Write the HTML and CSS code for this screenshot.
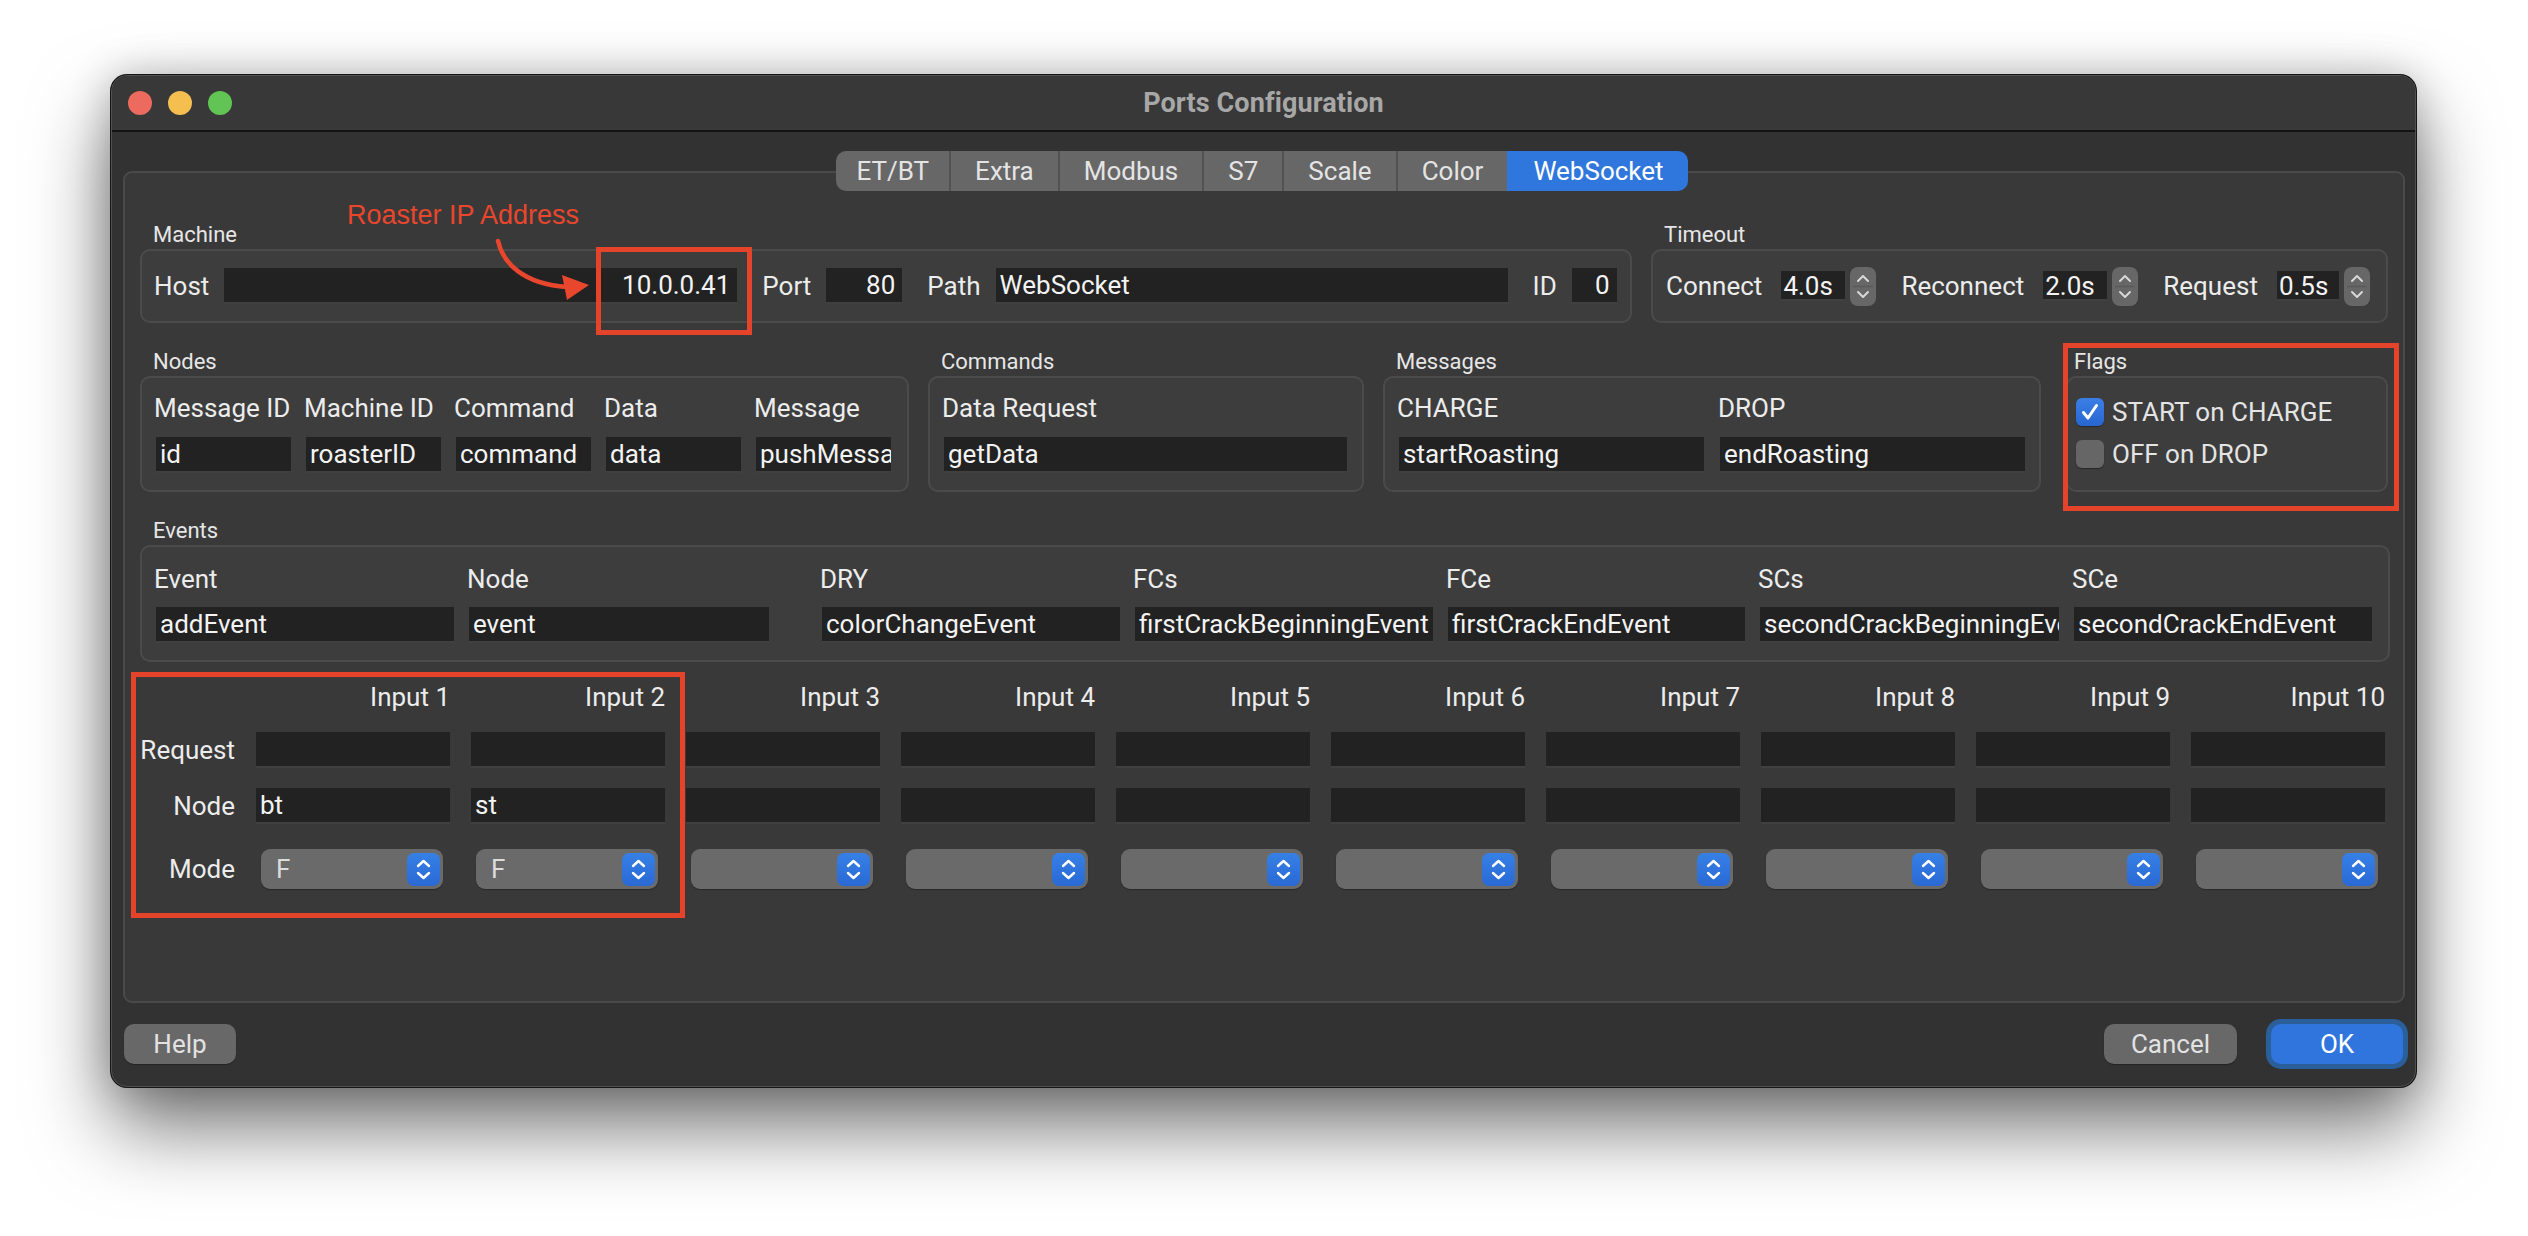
FILE: index.html
```html
<!DOCTYPE html>
<html lang="en">
<head>
<meta charset="utf-8">
<title>Ports Configuration</title>
<link rel="stylesheet" href="styles.css">
</head>
<body>
<div class="window">
  <div class="titlebar">
    <div class="lights">
      <span class="light red"></span>
      <span class="light yellow"></span>
      <span class="light green"></span>
    </div>
    <div class="title">Ports Configuration</div>
    <div></div>
  </div>

  <div class="content">
    <div class="tabs">
      <div class="tab">ET/BT</div>
      <div class="tab">Extra</div>
      <div class="tab">Modbus</div>
      <div class="tab">S7</div>
      <div class="tab">Scale</div>
      <div class="tab">Color</div>
      <div class="tab active">WebSocket</div>
    </div>

    <div class="pane">
      <div class="row row1">
        <div class="section sec-machine">
          <div class="sec-title">Machine</div>
          <div class="group hgroup">
            <span class="lbl">Host</span>
            <span class="field right w-host">10.0.0.41</span>
            <span class="lbl">Port</span>
            <span class="field right w-port">80</span>
            <span class="lbl">Path</span>
            <span class="field w-path">WebSocket</span>
            <span class="lbl">ID</span>
            <span class="field right w-id">0</span>
          </div>
        </div>
        <div class="section sec-timeout">
          <div class="sec-title">Timeout</div>
          <div class="group hgroup tgroup">
            <span class="lbl">Connect</span>
            <span class="field small w-time">4.0s</span>
            <span class="spin"><svg width="26" height="39" viewBox="0 0 26 39"><path d="M8 14 L13 9 L18 14" /><path d="M8 25 L13 30 L18 25" /><line x1="3" y1="19.5" x2="23" y2="19.5" class="div"/></svg></span>
            <span class="lbl">Reconnect</span>
            <span class="field small w-time">2.0s</span>
            <span class="spin"><svg width="26" height="39" viewBox="0 0 26 39"><path d="M8 14 L13 9 L18 14" /><path d="M8 25 L13 30 L18 25" /><line x1="3" y1="19.5" x2="23" y2="19.5" class="div"/></svg></span>
            <span class="lbl">Request</span>
            <span class="field small w-time2">0.5s</span>
            <span class="spin"><svg width="26" height="39" viewBox="0 0 26 39"><path d="M8 14 L13 9 L18 14" /><path d="M8 25 L13 30 L18 25" /><line x1="3" y1="19.5" x2="23" y2="19.5" class="div"/></svg></span>
          </div>
        </div>
      </div>

      <div class="row row2">
        <div class="section sec-nodes">
          <div class="sec-title">Nodes</div>
          <div class="group vgroup nodes-grid">
            <span class="hdr">Message ID</span>
            <span class="hdr">Machine ID</span>
            <span class="hdr">Command</span>
            <span class="hdr">Data</span>
            <span class="hdr">Message</span>
            <span class="field">id</span>
            <span class="field">roasterID</span>
            <span class="field">command</span>
            <span class="field">data</span>
            <span class="field">pushMessage</span>
          </div>
        </div>
        <div class="section sec-commands">
          <div class="sec-title">Commands</div>
          <div class="group vgroup cmd-grid">
            <span class="hdr">Data Request</span>
            <span class="field">getData</span>
          </div>
        </div>
        <div class="section sec-messages">
          <div class="sec-title">Messages</div>
          <div class="group vgroup msg-grid">
            <span class="hdr">CHARGE</span>
            <span class="hdr">DROP</span>
            <span class="field">startRoasting</span>
            <span class="field">endRoasting</span>
          </div>
        </div>
        <div class="section sec-flags">
          <div class="sec-title">Flags</div>
          <div class="group flags">
            <div class="flag">
              <span class="check on"><svg width="28" height="28" viewBox="0 0 28 28"><path d="M7.5 14.5 L12 20 L20.5 7.5"/></svg></span>
              <span class="lbl">START on CHARGE</span>
            </div>
            <div class="flag">
              <span class="check"></span>
              <span class="lbl">OFF on DROP</span>
            </div>
          </div>
        </div>
      </div>

      <div class="row row3">
        <div class="section sec-events">
          <div class="sec-title">Events</div>
          <div class="group vgroup events-grid">
            <span class="hdr">Event</span>
            <span class="hdr">Node</span>
            <span class="hdr dry">DRY</span>
            <span class="hdr">FCs</span>
            <span class="hdr">FCe</span>
            <span class="hdr">SCs</span>
            <span class="hdr">SCe</span>
            <span class="field">addEvent</span>
            <span class="field">event</span>
            <span class="field dry">colorChangeEvent</span>
            <span class="field">firstCrackBeginningEvent</span>
            <span class="field">firstCrackEndEvent</span>
            <span class="field">secondCrackBeginningEvent</span>
            <span class="field">secondCrackEndEvent</span>
          </div>
        </div>
      </div>

      <div class="inputs">
        <span></span>
        <span class="ihdr">Input 1</span>
        <span class="ihdr">Input 2</span>
        <span class="ihdr">Input 3</span>
        <span class="ihdr">Input 4</span>
        <span class="ihdr">Input 5</span>
        <span class="ihdr">Input 6</span>
        <span class="ihdr">Input 7</span>
        <span class="ihdr">Input 8</span>
        <span class="ihdr">Input 9</span>
        <span class="ihdr">Input 10</span>

        <span class="rlbl">Request</span>
        <span class="field"></span><span class="field"></span><span class="field"></span><span class="field"></span><span class="field"></span>
        <span class="field"></span><span class="field"></span><span class="field"></span><span class="field"></span><span class="field"></span>

        <span class="rlbl">Node</span>
        <span class="field">bt</span><span class="field">st</span><span class="field"></span><span class="field"></span><span class="field"></span>
        <span class="field"></span><span class="field"></span><span class="field"></span><span class="field"></span><span class="field"></span>

        <span class="rlbl moderow">Mode</span>
        <span class="combo"><span class="cval">F</span><span class="cbtn"><svg width="33" height="33" viewBox="0 0 33 33"><path d="M11 13 L16.5 8 L22 13"/><path d="M11 20 L16.5 25 L22 20"/></svg></span></span>
        <span class="combo"><span class="cval">F</span><span class="cbtn"><svg width="33" height="33" viewBox="0 0 33 33"><path d="M11 13 L16.5 8 L22 13"/><path d="M11 20 L16.5 25 L22 20"/></svg></span></span>
        <span class="combo"><span class="cval"></span><span class="cbtn"><svg width="33" height="33" viewBox="0 0 33 33"><path d="M11 13 L16.5 8 L22 13"/><path d="M11 20 L16.5 25 L22 20"/></svg></span></span>
        <span class="combo"><span class="cval"></span><span class="cbtn"><svg width="33" height="33" viewBox="0 0 33 33"><path d="M11 13 L16.5 8 L22 13"/><path d="M11 20 L16.5 25 L22 20"/></svg></span></span>
        <span class="combo"><span class="cval"></span><span class="cbtn"><svg width="33" height="33" viewBox="0 0 33 33"><path d="M11 13 L16.5 8 L22 13"/><path d="M11 20 L16.5 25 L22 20"/></svg></span></span>
        <span class="combo"><span class="cval"></span><span class="cbtn"><svg width="33" height="33" viewBox="0 0 33 33"><path d="M11 13 L16.5 8 L22 13"/><path d="M11 20 L16.5 25 L22 20"/></svg></span></span>
        <span class="combo"><span class="cval"></span><span class="cbtn"><svg width="33" height="33" viewBox="0 0 33 33"><path d="M11 13 L16.5 8 L22 13"/><path d="M11 20 L16.5 25 L22 20"/></svg></span></span>
        <span class="combo"><span class="cval"></span><span class="cbtn"><svg width="33" height="33" viewBox="0 0 33 33"><path d="M11 13 L16.5 8 L22 13"/><path d="M11 20 L16.5 25 L22 20"/></svg></span></span>
        <span class="combo"><span class="cval"></span><span class="cbtn"><svg width="33" height="33" viewBox="0 0 33 33"><path d="M11 13 L16.5 8 L22 13"/><path d="M11 20 L16.5 25 L22 20"/></svg></span></span>
        <span class="combo"><span class="cval"></span><span class="cbtn"><svg width="33" height="33" viewBox="0 0 33 33"><path d="M11 13 L16.5 8 L22 13"/><path d="M11 20 L16.5 25 L22 20"/></svg></span></span>
      </div>
    </div>

    <div class="buttons">
      <span class="btn help">Help</span>
      <span class="spacer"></span>
      <span class="btn cancel">Cancel</span>
      <span class="btn ok">OK</span>
    </div>
  </div>

  <div class="note-text">Roaster IP Address</div>
  <svg class="note-arrow" width="120" height="75" viewBox="0 0 120 75">
    <path class="stroke" d="M17 10 C22 32 42 53 86 56"/>
    <polygon points="81,44 108,54 86,69"/>
  </svg>
  <div class="note-box box-ip"></div>
  <div class="note-box box-flags"></div>
  <div class="note-box box-inputs"></div>
</div>
</body>
</html>
```

FILE: styles.css
```css
* { box-sizing: border-box; }

html { background: #ffffff; }

body {
  margin: 0;
  min-height: 1236px;
  background: #ffffff;
  padding: 75px 0 0 111px;
  font-family: Roboto, "Liberation Sans", Arial, sans-serif;
  font-size: 26px;
  color: #e9e9e9;
}

.window {
  position: relative;
  width: 2305px;
  height: 1012px;
  background: #323232;
  border: 1px solid #505050;
  border-radius: 16px;
  overflow: hidden;
  box-shadow:
    0 0 0 1px #161616,
    0 40px 80px rgba(0, 0, 0, 0.55),
    0 0 40px rgba(0, 0, 0, 0.22);
}

/* Title bar */
.titlebar {
  height: 56px;
  background: #383838;
  border-bottom: 2px solid #131313;
  display: grid;
  grid-template-columns: 1fr auto 1fr;
  align-items: center;
}
.lights {
  display: flex;
  gap: 16px;
  padding-left: 16px;
}
.light {
  width: 24px;
  height: 24px;
  border-radius: 50%;
  display: block;
}
.light.red { background: #ec6a5e; }
.light.yellow { background: #f4bf4f; }
.light.green { background: #61c454; }
.title {
  font-weight: bold;
  font-size: 27px;
  color: #a7a7a7;
  letter-spacing: 0.1px;
}

/* Content */
.content {
  padding: 19px 10px 0 11px;
}

.tabs {
  position: relative;
  z-index: 1;
  display: flex;
  justify-content: center;
  height: 40px;
  margin-bottom: -20px;
  padding-right: 4px;
}
.tab {
  background: #676767;
  color: #e4e4e4;
  height: 40px;
  line-height: 40px;
  padding: 0 24px;
  border-left: 2px solid #525252;
}
.tab:first-child {
  border-left: none;
  border-radius: 10px 0 0 10px;
  padding-left: 20px;
  padding-right: 20px;
}
.tab:last-child {
  border-radius: 0 10px 10px 0;
}
.tab.active {
  background: #2f77dc;
  color: #ffffff;
  border-left-color: #2f77dc;
}

.pane {
  height: 832px;
  background: #393939;
  border: 2px solid #4a4a4a;
  border-radius: 9px;
  padding: 48px 15px 0 15px;
}

.row {
  display: flex;
  gap: 19px;
}
.row2, .row3 { margin-top: 25px; }

.sec-title {
  font-size: 22px;
  line-height: 28px;
  height: 28px;
  padding-left: 13px;
  color: #e6e6e6;
}

.group {
  background: #3d3d3d;
  border: 2px solid #4b4b4b;
  border-radius: 10px;
}

.hgroup {
  height: 74px;
  display: flex;
  align-items: center;
  padding-left: 12px;
}

.sec-machine { width: 1492px; }
.sec-timeout { flex: 1; }

.lbl {
  white-space: nowrap;
  color: #ececec;
}
.hgroup .lbl { margin-right: 15px; }
.hgroup .field + .lbl { margin-left: 25px; }
.tgroup { padding-left: 13px; }
.tgroup .lbl { margin-right: 19px; }
.tgroup .spin + .lbl { margin-left: 25px; }

.field {
  display: block;
  background: #222222;
  height: 36px;
  line-height: 35px;
  border-bottom: 2px solid #404040;
  padding: 0 4px;
  color: #f3f3f3;
  white-space: nowrap;
  overflow: hidden;
}
.field.right { text-align: right; padding-right: 7px; }
.field.small { height: 30px; line-height: 30px; padding: 0 2px; }

.w-host { width: 513px; }
.w-port { width: 76px; }
.w-path { width: 512px; }
.w-id { width: 45px; }
.w-time { width: 64px; }
.w-time2 { width: 62px; }

.spin {
  display: block;
  width: 26px;
  height: 39px;
  margin-left: 5px;
  background: #676767;
  border-radius: 8px;
}
.spin svg { display: block; }
.spin path {
  fill: none;
  stroke: #d8d8d8;
  stroke-width: 2;
  stroke-linecap: round;
  stroke-linejoin: round;
}
.spin .div { stroke: #5a5a5a; stroke-width: 1.5; }

/* Row 2 */
.vgroup {
  display: grid;
  column-gap: 15px;
  row-gap: 14px;
  padding: 15px 16px 17px 14px;
  grid-template-rows: 30px 36px;
}
.hdr {
  line-height: 30px;
  white-space: nowrap;
  color: #ececec;
  margin-left: -2px;
}
.sec-nodes { width: 769px; }
.nodes-grid { grid-template-columns: repeat(5, 135px); }
.sec-commands { width: 436px; }
.cmd-grid { grid-template-columns: 403px; }
.sec-messages { width: 658px; }
.msg-grid { grid-template-columns: repeat(2, 305px); column-gap: 16px; }
.sec-flags { flex: 1; margin-left: 6px; }
.sec-flags .sec-title { padding-left: 8px; }

.flags {
  height: 116px;
  padding: 20px 8px 0 8px;
  display: flex;
  flex-direction: column;
  gap: 14px;
}
.flag {
  display: flex;
  align-items: center;
  height: 28px;
}
.flag .lbl { margin-left: 8px; color: #e4e4e4; }
.check {
  display: block;
  width: 28px;
  height: 28px;
  border-radius: 6px;
  background: #666666;
  box-shadow: 0 1px 1px rgba(0, 0, 0, 0.35);
}
.check.on { background: linear-gradient(#3a7fe6, #2866d2); }
.check svg { display: block; }
.check path {
  fill: none;
  stroke: #ffffff;
  stroke-width: 3;
  stroke-linecap: round;
  stroke-linejoin: round;
}

/* Row 3 */
.sec-events { flex: 1; }
.events-grid {
  grid-template-columns: 298px 300px 336px 298px 297px 299px 298px;
  padding-top: 17px;
  padding-bottom: 17px;
  row-gap: 13px;
}
.events-grid .dry { margin-left: 38px; }
.events-grid .hdr.dry { margin-left: 36px; }

/* Inputs grid */
.inputs {
  display: grid;
  grid-template-columns: 105px repeat(10, 194px);
  column-gap: 21px;
  row-gap: 20px;
  align-items: center;
  margin: 20px 0 0 -10px;
}
.ihdr {
  text-align: right;
  line-height: 30px;
  white-space: nowrap;
  color: #ececec;
}
.rlbl {
  text-align: right;
  color: #ececec;
}
.moderow { margin-top: 5px; }

.combo {
  display: flex;
  align-items: center;
  height: 40px;
  margin: 5px 7px 0 5px;
  background: #6a6a6a;
  border-radius: 9px;
  box-shadow: 0 1px 1px rgba(0, 0, 0, 0.3);
}
.cval {
  flex: 1;
  padding-left: 15px;
  color: #dcdcdc;
}
.cbtn {
  display: block;
  width: 33px;
  height: 33px;
  margin-right: 3px;
  border-radius: 7px;
  background: linear-gradient(#3680e6, #2a69d4);
}
.cbtn svg { display: block; }
.cbtn path {
  fill: none;
  stroke: #ffffff;
  stroke-width: 2.4;
  stroke-linecap: round;
  stroke-linejoin: round;
}

/* Buttons */
.buttons {
  display: flex;
  align-items: center;
  margin-top: 21px;
  height: 40px;
}
.spacer { flex: 1; }
.btn {
  display: block;
  height: 40px;
  line-height: 40px;
  text-align: center;
  border-radius: 10px;
  background: #686868;
  color: #e2e2e2;
  box-shadow: 0 1px 1px rgba(0, 0, 0, 0.3);
}
.help { width: 112px; margin-left: 1px; }
.cancel { width: 133px; }
.ok {
  width: 132px;
  margin: 0 2px 0 34px;
  background: #2f75dd;
  color: #ffffff;
  box-shadow: 0 0 0 5px #2a5f99;
}

/* Annotations (overlay) */
.note-text {
  position: absolute;
  left: 235px;
  top: 126px;
  font-family: "Liberation Sans", Arial, sans-serif;
  font-size: 27px;
  line-height: 27px;
  color: #e8462d;
  white-space: nowrap;
}
.note-arrow {
  position: absolute;
  left: 369px;
  top: 155px;
}
.note-arrow .stroke {
  fill: none;
  stroke: #e8462d;
  stroke-width: 4.5;
  stroke-linecap: round;
}
.note-arrow polygon { fill: #e8462d; }

.note-box {
  position: absolute;
  border: 5px solid #e6432b;
}
.box-ip { left: 484px; top: 171px; width: 156px; height: 88px; }
.box-flags { left: 1951px; top: 267px; width: 336px; height: 168px; }
.box-inputs { left: 19px; top: 596px; width: 554px; height: 246px; }
```
